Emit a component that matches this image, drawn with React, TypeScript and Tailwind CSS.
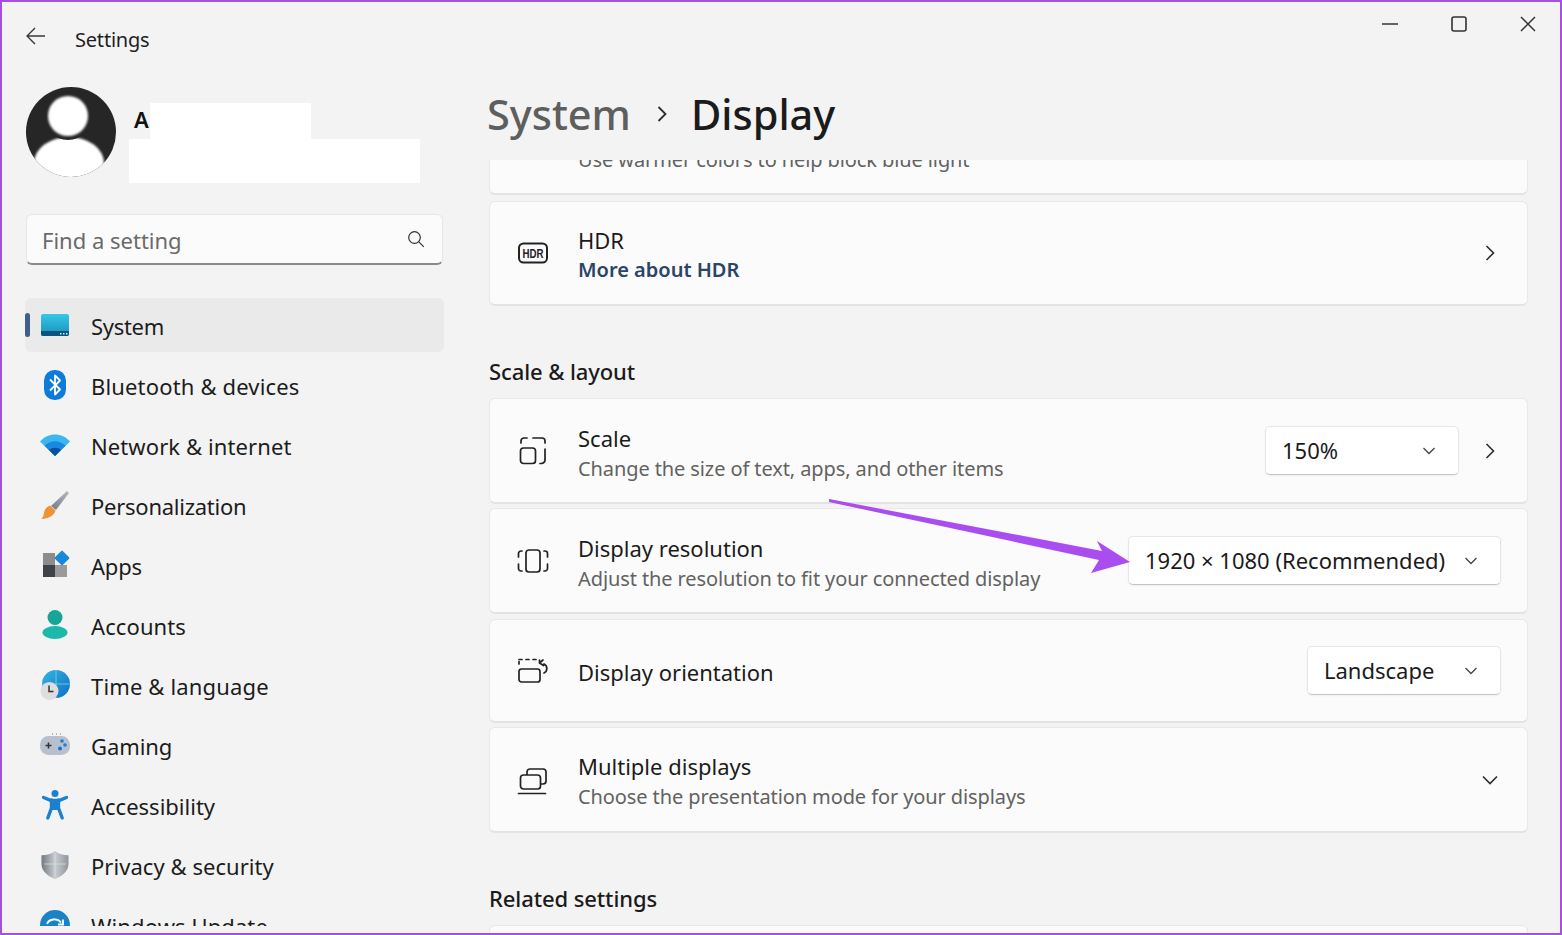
import React from "react";

const Sys = () => (
  <svg width="30" height="30" viewBox="0 0 30 30">
    <defs><linearGradient id="sg" x1="0" y1="0" x2="0" y2="1"><stop offset="0" stopColor="#34c8e8" /><stop offset="1" stopColor="#1b8fb8" /></linearGradient></defs>
    <rect x="1" y="4" width="28" height="22" rx="2" fill="url(#sg)" />
    <path d="M1 21h28v3a2 2 0 0 1-2 2H3a2 2 0 0 1-2-2z" fill="#0b5480" />
    <rect x="20" y="23" width="1.5" height="1.5" fill="#cfe" /><rect x="23" y="23" width="1.5" height="1.5" fill="#cfe" /><rect x="26" y="23" width="1.5" height="1.5" fill="#cfe" />
  </svg>
);
const Bt = () => (
  <svg width="30" height="32" viewBox="0 0 30 32">
    <rect x="4" y="1" width="22" height="30" rx="10.5" fill="#0e7ad9" />
    <path d="M10 10.5l10 10-5 5v-19l5 5-10 10" fill="none" stroke="#fff" strokeWidth="1.8" strokeLinejoin="round" />
  </svg>
);
const Wifi = () => (
  <svg width="30" height="24" viewBox="0 0 30 24">
    <path d="M0 8.5C4 4 9.500 1.500 15 1.500S26 4 30 8.500L15 23z" fill="#3cb7ee" />
    <path d="M4.500 12.800C7.500 9.800 11 8.300 15 8.300s7.500 1.500 10.500 4.500L15 23z" fill="#1689e0" />
    <path d="M9 17c1.800-1.600 3.800-2.300 6-2.300s4.200.7 6 2.300l-6 6z" fill="#0a4f9e" />
  </svg>
);
const Brush = () => (
  <svg width="30" height="30" viewBox="0 0 30 30">
    <defs><linearGradient id="bh" x1="0" y1="1" x2="1" y2="0"><stop offset="0" stopColor="#6f7b86" /><stop offset="1" stopColor="#b5bcc2" /></linearGradient></defs>
    <path d="M27 1l2 2L16 20l-5-4z" fill="url(#bh)" />
    <path d="M10 15.500l5.500 5c-1 4-5 8-14.500 8.500 3-2 2.500-5 3.500-8 .8-2.800 3-4.500 5.500-5.500z" fill="#ef9334" />
  </svg>
);
const Apps = () => (
  <svg width="30" height="30" viewBox="0 0 30 30">
    <rect x="3" y="3" width="12" height="12" fill="#8c8c8c" />
    <rect x="3" y="15" width="12" height="12" fill="#3f4247" />
    <rect x="15" y="15" width="12" height="12" fill="#9a9a9a" />
    <rect x="16.500" y="2.500" width="11" height="11" rx="1" fill="#1b87d8" transform="rotate(45 22 8)" />
  </svg>
);
const Acc = () => (
  <svg width="30" height="32" viewBox="0 0 30 32">
    <circle cx="15" cy="8.500" r="7.500" fill="#17a596" />
    <ellipse cx="15" cy="23.500" rx="12.500" ry="6.500" fill="#1cb8a8" />
  </svg>
);
const Time = () => (
  <svg width="32" height="32" viewBox="0 0 32 32">
    <defs><linearGradient id="tg" x1="0" y1="0" x2="1" y2="1"><stop offset="0" stopColor="#35b6df" /><stop offset="1" stopColor="#0e6fc4" /></linearGradient></defs>
    <circle cx="17" cy="15" r="14" fill="url(#tg)" />
    <path d="M17 1v28M3 15h28" stroke="#7fd0ee" strokeWidth=".8" />
    <circle cx="10.500" cy="22" r="9" fill="#dedede" />
    <path d="M10 16.500V22.500h4.500" stroke="#333" strokeWidth="1.500" fill="none" />
  </svg>
);
const Game = () => (
  <svg width="30" height="24" viewBox="0 0 30 24">
    <rect x="0" y="3" width="30" height="19" rx="8.500" fill="#b7c1cd" />
    <path d="M5.500 12.500h6M8.500 9.500v6" stroke="#30353b" strokeWidth="1.600" />
    <circle cx="22" cy="8" r="1.800" fill="#1f7fd0" /><circle cx="25" cy="12" r="1.800" fill="#1f7fd0" /><circle cx="20" cy="15.500" r="2" fill="#1f6fc0" />
    <path d="M12 1h1M16 1h1M20 1h1" stroke="#777" strokeWidth="1" />
  </svg>
);
const Access = () => (
  <svg width="30" height="32" viewBox="0 0 30 32">
    <circle cx="15" cy="4.500" r="3.500" fill="#1b80cf" />
    <path d="M3.500 8.500L11 11.500h8l7.500-3" stroke="#1b80cf" strokeWidth="3.400" strokeLinecap="round" fill="none" />
    <path d="M11.500 11v8L7.800 29M18.500 11v8l3.700 10" stroke="#1b80cf" strokeWidth="3.400" strokeLinecap="round" fill="none" />
    <path d="M11 11h8v10h-8z" fill="#1b80cf" />
  </svg>
);
const Shield = () => (
  <svg width="30" height="30" viewBox="0 0 30 30">
    <defs><linearGradient id="sh" x1="0" y1="0" x2="1" y2="0"><stop offset="0" stopColor="#74797d" /><stop offset=".5" stopColor="#c6ccd1" /><stop offset="1" stopColor="#8f959a" /></linearGradient></defs>
    <path d="M15 1c4 3 8 4 13.500 4.200V14c0 7-6 12-13.500 15C7.500 26 1.500 21 1.500 14V5.200C7 5 11 4 15 1z" fill="url(#sh)" />
    <path d="M15 3.500v23M4 14h22" stroke="#dfe3e6" strokeWidth=".7" />
  </svg>
);
const Upd = () => (
  <svg width="30" height="30" viewBox="0 0 30 30">
    <circle cx="15" cy="15" r="15" fill="#1a83c6" />
    <path d="M7 14c2-5 10-6.500 14-1.500" fill="none" stroke="#fff" strokeWidth="1.800" />
    <path d="M23 9.500v5h-5" fill="none" stroke="#fff" strokeWidth="1.800" />
  </svg>
);

const nav: [string, React.ReactNode, string][] = [
  ["System", <Sys />, "tracking-[-0.3px]"],
  ["Bluetooth & devices", <Bt />, "tracking-[0.16px]"],
  ["Network & internet", <Wifi />, "tracking-[0.1px]"],
  ["Personalization", <Brush />, "tracking-[-0.25px]"],
  ["Apps", <Apps />, "tracking-[-0.2px]"],
  ["Accounts", <Acc />, "tracking-[0.1px]"],
  ["Time & language", <Time />, "tracking-[0.15px]"],
  ["Gaming", <Game />, "tracking-[-0.1px]"],
  ["Accessibility", <Access />, "tracking-normal"],
  ["Privacy & security", <Shield />, "tracking-[0.05px]"],
  ["Windows Update", <Upd />, "tracking-[0.1px]"],
];

const Chevron = ({ down = false, size = 20, w = 1.600 }: { down?: boolean; size?: number; w?: number }) => (
  <svg width={size} height={size} viewBox="0 0 20 20" fill="none" stroke="#2c2c2c" strokeWidth={w}>
    {down ? <path d="M3 6.500l7 7 7-7" /> : <path d="M6.500 3l7 7-7 7" />}
  </svg>
);

const Drop = ({ label, className }: { label: string; className: string }) => (
  <div className={`h-[49px] flex items-center justify-between pl-[16px] pr-[21px] bg-white rounded-[5px] border border-[#e6e6e6] border-b-[#c4c4c4] shadow-[0_1px_2px_rgba(0,0,0,0.05)] text-[22px] text-[#1b1b1b] ${className}`}>
    <span className="-mt-[1px]">{label}</span>
    <svg width="16" height="16" viewBox="0 0 16 16" fill="none" stroke="#444" strokeWidth="1.300"><path d="M2.500 5l5.500 5.500L13.500 5" /></svg>
  </div>
);

const Row = ({ icon, title, desc, right, h, className = "", pt = "pt-[5px]" }: { icon: React.ReactNode; title: string; desc?: React.ReactNode; right?: React.ReactNode; h: string; className?: string; pt?: string }) => (
  <div className={`${h} shrink-0 flex items-center bg-[#fbfbfb] rounded-[6px] border border-[#e8e8e8] border-b-2 border-b-[#e3e3e3] pl-[27px] ${className}`}>
    <div className="w-[32px] h-[32px] flex items-center justify-center shrink-0">{icon}</div>
    <div className={`ml-[29px] flex-1 flex flex-col ${pt}`}>
      <div className="text-[22px] leading-[30px] text-[#1b1b1b]">{title}</div>
      {desc}
    </div>
    {right}
  </div>
);
const Desc = ({ children }: { children: React.ReactNode }) => <div className="mt-[1px] text-[20px] leading-[30px] tracking-[-0.1px] text-[#626262]">{children}</div>;

const IC = "#222";
const IconProps = { fill: "none", stroke: IC, strokeWidth: 1.700, width: 32, height: 32, viewBox: "0 0 32 32", strokeLinecap: "round" as const, strokeLinejoin: "round" as const };

export default function App() {
  return (
    <div className="relative w-[1562px] h-[935px] overflow-hidden border-2 border-[#a650e0] bg-[#f3f3f3] flex font-['Noto_Sans',sans-serif]">
      {/* sidebar */}
      <aside className="w-[487px] shrink-0 h-full flex flex-col pl-[23px] pb-[7px]">
        <div className="h-[75px] shrink-0 flex items-center">
          <svg width="22" height="20" viewBox="0 0 22 20" fill="none" stroke="#3a3a3a" strokeWidth="1.400" className="-mt-[7px]"><path d="M20 10H2M10 2l-8 8 8 8" /></svg>
          <span className="ml-[28px] text-[20px] tracking-[-0.2px] text-[#1f1f1f]">Settings</span>
        </div>
        <div className="h-[100px] mt-[10px] shrink-0 flex items-start pl-[1px]">
          <svg width="90" height="90" viewBox="0 0 90 90" className="shrink-0">
            <defs>
              <clipPath id="av"><circle cx="45" cy="45" r="45" /></clipPath>
              <filter id="bl"><feGaussianBlur stdDeviation="1.200" /></filter>
            </defs>
            <g clipPath="url(#av)">
              <rect width="90" height="90" fill="#262626" />
              <ellipse cx="43" cy="76" rx="35" ry="26" fill="#fff" filter="url(#bl)" />
              <circle cx="42" cy="29" r="24" fill="#262626" />
              <circle cx="42" cy="29" r="20" fill="#fff" filter="url(#bl)" />
            </g>
          </svg>
          <div className="ml-[13px] mt-[16px] flex flex-col">
            <div className="flex items-stretch h-[36px]">
              <span className="ml-[5px] w-[16px] font-semibold text-[22px] leading-[32px] text-[#111]">A</span>
              <div className="w-[161px] bg-white" />
            </div>
            <div className="w-[291px] h-[44px] bg-white" />
          </div>
        </div>
        <div className="ml-[1px] mt-[27px] w-[417px] h-[51px] shrink-0 flex items-center justify-between pl-[15px] pr-[17px] bg-[#fbfbfb] rounded-[6px] border border-[#e6e6e6] border-b-2 border-b-[#8a8a8a]">
          <span className="text-[22px] text-[#6a6a6a] mt-[2px]">Find a setting</span>
          <svg width="18" height="18" viewBox="0 0 18 18" fill="none" stroke="#333" strokeWidth="1.200"><circle cx="7.500" cy="7.500" r="5.800" /><path d="M11.800 11.800l5 5" /></svg>
        </div>
        <nav className="mt-[33px] flex-1 min-h-0 overflow-hidden flex flex-col gap-[6px]">
          {nav.map(([label, icon, tr], i) => (
            <div key={label} className={`shrink-0 w-[419px] h-[54px] flex items-center rounded-[6px] ${i === 0 ? "bg-[#eaeaea]" : ""}`}>
              <div className={`w-[5px] h-[24px] rounded-[3px] ${i === 0 ? "bg-[#3d5f8a]" : ""}`} />
              <div className="ml-[9px] w-[32px] h-[32px] flex items-center justify-center">{icon}</div>
              <span className={`ml-[20px] mt-[2px] text-[22px] text-[#1c1c1c] ${tr}`}>{label}</span>
            </div>
          ))}
        </nav>
      </aside>

      {/* main */}
      <main className="w-[1071px] shrink-0 h-full flex flex-col">
        <header className="h-[158px] shrink-0 flex flex-col">
          <div className="h-[40px] flex justify-end items-center pr-[22px] gap-[49px] pt-[4px]">
            <svg width="20" height="20" viewBox="0 0 20 20" stroke="#333" strokeWidth="1.500"><path d="M2 10h16" /></svg>
            <svg width="20" height="20" viewBox="0 0 20 20" fill="none" stroke="#333" strokeWidth="1.600"><rect x="3" y="3" width="14" height="14" rx="2" /></svg>
            <svg width="20" height="20" viewBox="0 0 20 20" fill="none" stroke="#333" strokeWidth="1.500"><path d="M3 3l14 14M17 3L3 17" /></svg>
          </div>
          <div className="h-[88px] mt-[28px] -ml-[2px] flex items-center text-[41.500px] font-medium">
            <span className="text-[#5e5e5e]">System</span>
            <div className="ml-[21px] mr-[19px] -mt-[1px]"><Chevron size={20} w={1.800} /></div>
            <span className="text-[#1b1b1b]">Display</span>
          </div>
        </header>
        <div className="flex-1 min-h-0 overflow-hidden flex flex-col pr-[32px]">
          <div className="-mt-[66px] h-[101px] shrink-0 flex items-end bg-[#fbfbfb] rounded-[6px] border border-[#e8e8e8] border-b-2 border-b-[#e3e3e3] pl-[88px] pb-[18px]">
            <Desc>Use warmer colors to help block blue light</Desc>
          </div>
          <Row
            className="mt-[6px]"
            h="h-[105px]"
            pt="pt-[2px]"
            icon={
              <svg width="32" height="24" viewBox="0 0 32 24">
                <rect x="2" y="2.500" width="28" height="19" rx="4.500" fill="none" stroke={IC} strokeWidth="2" />
                <text x="16" y="17" textAnchor="middle" fontSize="13" fontWeight="700" fill={IC} fontFamily="'Liberation Sans', sans-serif" textLength="21" lengthAdjust="spacingAndGlyphs">HDR</text>
              </svg>
            }
            title="HDR"
            desc={<div className="text-[20px] leading-[29px] font-semibold text-[#2c4466]">More about HDR</div>}
            right={<div className="mr-[27px]"><Chevron /></div>}
          />
          <h2 className="mt-[47px] h-[36px] leading-[36px] text-[22px] font-medium tracking-[-0.1px] text-[#1b1b1b] shrink-0">Scale &amp; layout</h2>
          <Row
            className="mt-[9px]"
            h="h-[106px]"
            icon={
              <svg {...IconProps}>
                <rect x="3.500" y="13" width="15" height="15.500" rx="3" />
                <path d="M4 8V6a3 3 0 0 1 3-3h3M16 3h6M22 3h3a3 3 0 0 1 3 3v2M28 14v11a3.500 3.500 0 0 1-3.500 3.500H23" />
              </svg>
            }
            title="Scale"
            desc={<Desc>Change the size of text, apps, and other items</Desc>}
            right={
              <>
                <Drop label="150%" className="w-[194px] mr-[21px]" />
                <div className="mr-[27px]"><Chevron /></div>
              </>
            }
          />
          <Row
            className="mt-[4px]"
            h="h-[106px]"
            icon={
              <svg {...IconProps}>
                <rect x="9" y="5" width="14" height="22" rx="3" />
                <path d="M5 6H4a2.500 2.500 0 0 0-2.500 2.500V12M1.500 19v4.500A2.500 2.500 0 0 0 4 26h1M27 6h1a2.500 2.500 0 0 1 2.500 2.500V12M30.500 19v4.500A2.500 2.500 0 0 1 28 26h-1" />
              </svg>
            }
            title="Display resolution"
            desc={<Desc>Adjust the resolution to fit your connected display</Desc>}
            right={<Drop label="1920 × 1080 (Recommended)" className="w-[373px] mr-[26px]" />}
          />
          <Row
            className="mt-[5px]"
            h="h-[104px]"
            pt="pt-[3px]"
            icon={
              <svg {...IconProps}>
                <rect x="2" y="14" width="21" height="13" rx="2.500" />
                <path d="M2 9V6.500M2 4.500h3M9 4.500h3M16 4.500h3M22.500 5v3M27 9a5 5 0 0 1 0 9M26 5l-3.500 3 4 2.500" />
              </svg>
            }
            title="Display orientation"
            right={<Drop label="Landscape" className="w-[194px] mr-[26px]" />}
          />
          <Row
            className="mt-[4px]"
            h="h-[106px]"
            pt="pt-[4px]"
            icon={
              <svg {...IconProps}>
                <rect x="10" y="5" width="19" height="15" rx="3" fill="#fbfbfb" />
                <rect x="3.500" y="11" width="20" height="14" rx="3" fill="#fbfbfb" />
                <path d="M1.500 29.500h27" />
              </svg>
            }
            title="Multiple displays"
            desc={<Desc>Choose the presentation mode for your displays</Desc>}
            right={<div className="mr-[27px]"><Chevron down /></div>}
          />
          <h2 className="mt-[47px] h-[36px] leading-[36px] text-[22px] font-medium tracking-[-0.1px] text-[#1b1b1b] shrink-0">Related settings</h2>
          <div className="mt-[9px] h-[60px] shrink-0 bg-[#fbfbfb] rounded-[6px] border border-[#e8e8e8]" />
        </div>
      </main>

      {/* annotation arrow over the page */}
      <svg className="absolute left-[826px] top-[495px] pointer-events-none" width="306" height="82" viewBox="828 497 306 82">
        <path d="M829 499L1102 551L1097 541L1130 562L1091 573L1099 560L829 502z" fill="#a94df0" />
      </svg>
    </div>
  );
}
